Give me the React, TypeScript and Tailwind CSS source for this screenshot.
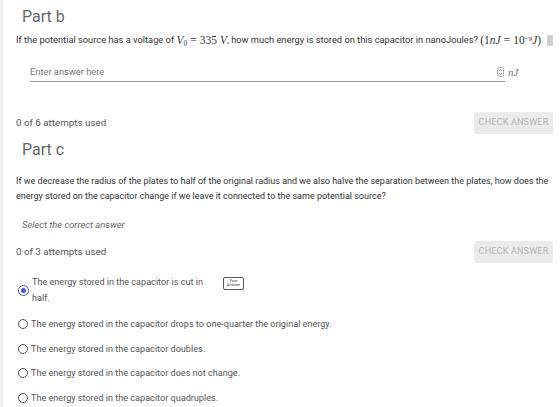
import React from "react";

const OPTIONS = [
  "The energy stored in the capacitor drops to one-quarter the original energy.",
  "The energy stored in the capacitor doubles.",
  "The energy stored in the capacitor does not change.",
  "The energy stored in the capacitor quadruples.",
];

function CheckButton() {
  return (
    <button className="h-[22px] w-[79px] shrink-0 rounded-[2px] bg-[#ebebeb] text-[9px] uppercase tracking-[0.2px] text-[#b3b3b3]">
      Check Answer
    </button>
  );
}

function Radio({ checked }: { checked?: boolean }) {
  if (checked) {
    return (
      <span className="flex h-[11px] w-[11px] shrink-0 items-center justify-center rounded-full border-[1.5px] border-[#4a55d6]">
        <span className="block h-[5px] w-[5px] rounded-full bg-[#4a55d6]" />
      </span>
    );
  }
  return <span className="block h-[10px] w-[10px] shrink-0 rounded-full border-[1.5px] border-[#555]" />;
}

const serif = "font-['Liberation_Serif',serif]";

export default function App() {
  return (
    <div className="flex h-[407px] w-[560px] overflow-hidden bg-white font-['Roboto',sans-serif]">
      <div className="w-[3px] shrink-0 bg-[#efefef]" />
      <div className="min-w-0 flex-1 pl-[13px] pr-[7px]">
        {/* Part b */}
        <h2 className="pl-[6px] pt-[7px] text-[16px] leading-[20px] text-[#666]">Part b</h2>
        <div className="mt-[5px] flex items-center overflow-hidden whitespace-nowrap text-[9.3px] leading-[16px] text-[#333]">
          <span>If the potential source has a voltage of&nbsp;</span>
          <span className={`${serif} text-[11.5px]`}>
            <i>V</i>
            <sub className="text-[7.5px]">0</sub>
            <span className="mx-[3px]">=</span>335<i className="ml-[3px]">V</i>
          </span>
          <span>, how much energy is stored on this capacitor in nanoJoules?&nbsp;</span>
          <span className={`${serif} text-[11.5px]`}>
            (1<i>nJ</i>
            <span className="mx-[3px]">=</span>10<sup className="text-[7px]">−9</sup>
            <i>J</i>)
          </span>
          <span className="ml-[6px] block h-[11px] w-[6px] shrink-0 rounded-[1px] bg-[#cfcfcf]" />
        </div>

        <div className="mt-[15px] flex items-end">
          <div className="ml-[14px] flex h-[19px] w-[475px] items-center justify-between border-b border-[#9a9a9a] pb-[1px]">
            <span className="text-[9.3px] text-[#777]">Enter answer here</span>
            <svg width="7" height="10" viewBox="0 0 7 10" className="mr-[1px]">
              <rect x="0.5" y="0.5" width="6" height="9" rx="2" fill="none" stroke="#aaa" />
              <path d="M2 4 L3.5 2.6 L5 4 M2 6 L3.5 7.4 L5 6" fill="none" stroke="#888" strokeWidth="0.8" />
            </svg>
          </div>
          <span className={`${serif} ml-[3px] pb-[2px] text-[11px] italic text-[#777]`}>nJ</span>
        </div>

        <div className="mt-[30px] flex items-center justify-between">
          <span className="text-[9.8px] text-[#555]">0 of 6 attempts used</span>
          <CheckButton />
        </div>

        {/* Part c */}
        <h2 className="mt-[6px] pl-[6px] text-[16px] leading-[20px] text-[#666]">Part c</h2>
        <p className="mt-[14px] text-[9px] leading-[15px] text-[#333]">
          If we decrease the radius of the plates to half of the original radius and we also halve the separation between the plates, how does the energy stored on the capacitor change if we leave it connected to the same potential source?
        </p>
        <p className="mt-[14px] pl-[6px] text-[9.4px] italic leading-[14px] text-[#666]">Select the correct answer</p>

        <div className="mt-[9px] flex items-center justify-between">
          <span className="text-[9.8px] text-[#555]">0 of 3 attempts used</span>
          <CheckButton />
        </div>

        <div className="mt-[11px] flex items-center">
          <span className="ml-[2px] block">
            <Radio checked />
          </span>
          <span className="ml-[3px] w-[185px] text-[9.1px] leading-[16px] text-[#555]">
            The energy stored in the capacitor is cut in half.
          </span>
          <span className="ml-[6px] mt-[-14px] flex h-[13px] w-[21px] flex-col items-center justify-center rounded-[2px] border border-[#555] text-[4px] leading-[4.5px] text-[#333]">
            <span>Your</span>
            <span>Answer</span>
          </span>
        </div>

        <div className="mt-[10px] flex flex-col gap-[8.5px]">
          {OPTIONS.map((o) => (
            <div key={o} className="flex items-center">
              <span className="ml-[2px] block">
                <Radio />
              </span>
              <span className="ml-[3px] text-[9.1px] leading-[16px] text-[#555]">{o}</span>
            </div>
          ))}
        </div>
      </div>
    </div>
  );
}
